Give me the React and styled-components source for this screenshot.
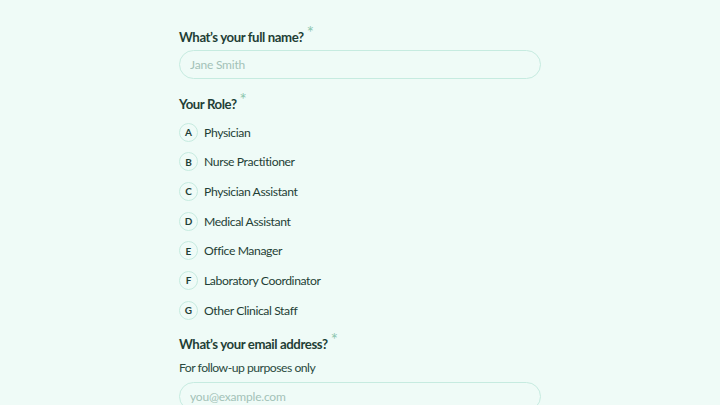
import React from 'react';
import styled, { createGlobalStyle } from 'styled-components';

const GlobalStyle = createGlobalStyle`
  html, body {
    margin: 0;
    padding: 0;
    background: #effbf7;
  }
  body {
    font-family: 'Lato', 'Liberation Sans', sans-serif;
    color: #1f3f36;
  }
`;

const Page = styled.div`
  width: 100%;
  height: 405px;
  display: flex;
  justify-content: center;
  overflow: hidden;
`;

const Form = styled.div`
  width: 362px;
  padding-top: 27px;
  display: flex;
  flex-direction: column;
`;

const Field = styled.section`
  display: flex;
  flex-direction: column;
  margin-bottom: ${p => p.$gap || 15}px;
`;

const Label = styled.h2`
  margin: 0;
  height: 20px;
  font-size: 13.2px;
  font-weight: 700;
  letter-spacing: -0.4px;
  line-height: 20px;
  color: #1f3f36;
  display: flex;
  align-items: flex-start;
`;

const Star = styled.span`
  color: #8cc6ae;
  font-size: 17px;
  font-weight: 400;
  line-height: 1;
  margin-left: 3px;
  margin-top: -3px;
`;

const Hint = styled.p`
  margin: 5px 0 0;
  font-size: 12.2px;
  letter-spacing: -0.5px;
  line-height: 18px;
  color: #2a4a40;
`;

const Input = styled.input`
  margin-top: ${p => p.$top || 3}px;
  box-sizing: border-box;
  width: 100%;
  height: 29px;
  border: 1.5px solid #c6ebe0;
  border-radius: 15px;
  background: #effbf7;
  padding: 0 10px;
  font-family: inherit;
  font-size: 12px;
  letter-spacing: -0.2px;
  color: #1f3f36;
  outline: none;
  &::placeholder {
    color: #a3c2b7;
  }
`;

const Options = styled.ul`
  list-style: none;
  margin: 8.5px 0 0;
  padding: 0;
  display: flex;
  flex-direction: column;
  gap: 10.7px;
`;

const Option = styled.li`
  display: flex;
  align-items: center;
  gap: 6px;
  height: 19px;
`;

const Key = styled.span`
  box-sizing: border-box;
  width: 19px;
  height: 19px;
  border-radius: 50%;
  border: 1.5px solid #c6ebe0;
  display: flex;
  align-items: center;
  justify-content: center;
  font-size: 10px;
  font-weight: 700;
  color: #1f3f36;
`;

const OptionText = styled.span`
  font-size: 12.2px;
  letter-spacing: -0.4px;
  color: #1f3f36;
`;

const roles = [
  'Physician',
  'Nurse Practitioner',
  'Physician Assistant',
  'Medical Assistant',
  'Office Manager',
  'Laboratory Coordinator',
  'Other Clinical Staff',
];

export default function App() {
  return (
    <Page>
      <GlobalStyle />
      <Form>
        <Field $gap={15}>
          <Label>What’s your full name?<Star>*</Star></Label>
          <Input placeholder="Jane Smith" />
        </Field>
        <Field $gap={14.5}>
          <Label>Your Role?<Star>*</Star></Label>
          <Options>
            {roles.map((r, i) => (
              <Option key={r}>
                <Key>{String.fromCharCode(65 + i)}</Key>
                <OptionText>{r}</OptionText>
              </Option>
            ))}
          </Options>
        </Field>
        <Field>
          <Label>What’s your email address?<Star>*</Star></Label>
          <Hint>For follow-up purposes only</Hint>
          <Input placeholder="you@example.com" $top={5} />
        </Field>
      </Form>
    </Page>
  );
}
